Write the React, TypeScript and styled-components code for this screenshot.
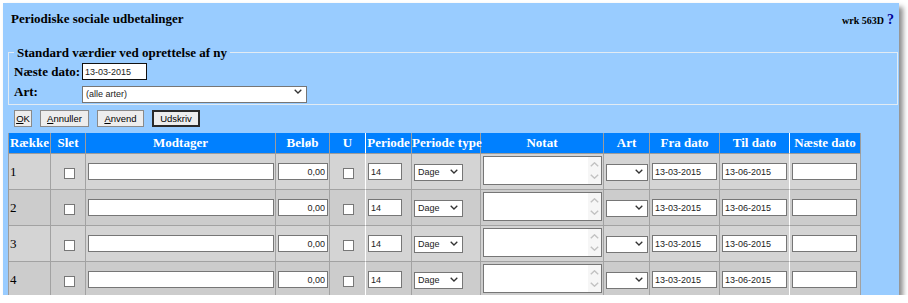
import React from "react";
import styled, { createGlobalStyle } from "styled-components";

const GlobalStyle = createGlobalStyle`
  html, body {
    margin: 0;
    padding: 0;
    background: #fff;
  }
  body {
    font-family: "Liberation Serif", "Times New Roman", serif;
    color: #000;
  }
`;

const sans = `"Liberation Sans", Arial, sans-serif`;

const Window = styled.div`
  margin: 3px 0 0 3px;
  width: 896px;
  height: 292px;
  background: #99ccff;
  box-shadow: 4px 4px 5px rgba(0, 0, 0, 0.45);
  overflow: hidden;
`;

const TitleBar = styled.div`
  display: flex;
  justify-content: space-between;
  align-items: flex-start;
  height: 42px;
  padding: 0 5px 0 8px;
`;

const Title = styled.h1`
  margin: 8px 0 0;
  font-size: 13px;
  line-height: 15px;
  font-weight: bold;
`;

const Meta = styled.div`
  margin-top: 9px;
  display: flex;
  align-items: baseline;
  gap: 3px;
  font-size: 10px;
  line-height: 16px;
  font-weight: bold;
`;

const Help = styled.span`
  font-size: 14px;
  color: #000099;
`;

const Fieldset = styled.fieldset`
  margin: 0 1px 0 5px;
  padding: 3px 4px 4px 5px;
  border: 1px solid #e2ebf3;
  min-width: 0;
`;

const Legend = styled.legend`
  padding: 0 3px;
  font-size: 13px;
  line-height: 15px;
  font-weight: bold;
`;

const FieldGrid = styled.div`
  display: grid;
  grid-template-columns: 68px auto;
  row-gap: 3px;
  align-items: center;
  justify-items: start;
`;

const Label = styled.label`
  font-size: 13px;
  line-height: 15px;
  font-weight: bold;
`;

const TextInput = styled.input<{ $w: number; $right?: boolean; $focus?: boolean }>`
  box-sizing: border-box;
  width: ${(p) => p.$w}px;
  height: 17px;
  margin: 0;
  padding: 0 2px;
  border: 1px solid ${(p) => (p.$focus ? "#111" : "#767676")};
  border-radius: 0;
  background: #fff;
  font: 9px ${sans};
  color: #222;
  text-align: ${(p) => (p.$right ? "right" : "left")};
  outline: none;
  vertical-align: middle;
`;

const SelectWrap = styled.div<{ $w: number }>`
  position: relative;
  width: ${(p) => p.$w}px;
  height: 17px;
`;

const Select = styled.select`
  appearance: none;
  box-sizing: border-box;
  width: 100%;
  height: 100%;
  margin: 0;
  padding: 0 14px 0 3px;
  border: 1px solid #767676;
  border-radius: 0;
  background: #fff;
  font: 9px ${sans};
  color: #222;
  outline: none;
`;

const Chevron = styled.svg`
  position: absolute;
  right: 5px;
  top: 6px;
  pointer-events: none;
`;

const ButtonRow = styled.div`
  display: flex;
  gap: 8px;
  margin: 5px 0 0 11px;
`;

const Button = styled.button<{ $w: number; $default?: boolean }>`
  box-sizing: border-box;
  width: ${(p) => p.$w}px;
  height: 17px;
  margin: 0;
  padding: 0;
  border: ${(p) => (p.$default ? "2px solid #2a2a2a" : "1px solid #8a8a8a")};
  border-radius: 0;
  background: #ededed;
  font: 9.5px ${sans};
  line-height: 13px;
  color: #000;
`;

const Table = styled.table`
  margin: 6px 0 0 5px;
  border-collapse: separate;
  border-spacing: 0;
  table-layout: fixed;
  width: 853px;
  border-left: 1px solid #9c9c9c;
`;

const Th = styled.th<{ $w: number; $edge?: boolean }>`
  box-sizing: border-box;
  width: ${(p) => p.$w}px;
  padding: 0;
  background: #0080ff;
  color: #fff;
  font-size: 13px;
  line-height: 20px;
  font-weight: bold;
  text-align: center;
  white-space: nowrap;
  border-right: 1px solid ${(p) => (p.$edge ? "#fff" : "#9c9c9c")};
  border-bottom: 1px solid #9c9c9c;
`;

const Row = styled.tr<{ $alt: boolean }>`
  background: ${(p) => (p.$alt ? "#cccccc" : "#d4d4d4")};
`;

const Td = styled.td<{ $edge?: boolean; $center?: boolean }>`
  padding: 0 0 0 2px;
  vertical-align: middle;
  text-align: ${(p) => (p.$center ? "center" : "left")};
  font-size: 13px;
  line-height: 15px;
  border-right: 1px solid ${(p) => (p.$edge ? "#fff" : "#a2a2a2")};
  border-bottom: 1px solid #a2a2a2;
`;

const NumCell = styled(Td)`
  padding-left: 1px;
`;

const Check = styled.input.attrs({ type: "checkbox" })`
  appearance: none;
  box-sizing: border-box;
  width: 11px;
  height: 11px;
  margin: 0;
  border: 1px solid #777;
  border-radius: 0;
  background: #fff;
  vertical-align: middle;
`;

const NoteBox = styled.div`
  display: flex;
  box-sizing: border-box;
  width: 119px;
  height: 29px;
  margin: 2px 0 4px;
  border: 1px solid #767676;
  background: #fff;
`;

const NoteArea = styled.textarea`
  flex: 1;
  min-width: 0;
  margin: 0;
  padding: 1px 2px;
  border: 0;
  resize: none;
  outline: none;
  overflow: hidden;
  background: transparent;
  font: 9px ${sans};
`;

const ScrollTrack = styled.div`
  width: 13px;
  padding: 5px 0;
  background: #f6f6f6;
  display: flex;
  flex-direction: column;
  justify-content: space-between;
  align-items: center;
`;

const columns = [
  { label: "Række", w: 42 },
  { label: "Slet", w: 35 },
  { label: "Modtager", w: 190 },
  { label: "Beløb", w: 54 },
  { label: "U", w: 36, edge: true },
  { label: "Periode", w: 46 },
  { label: "Periode type", w: 69 },
  { label: "Notat", w: 123 },
  { label: "Art", w: 46 },
  { label: "Fra dato", w: 70 },
  { label: "Til dato", w: 70, edge: true },
  { label: "Næste dato", w: 71 },
];

const rows = [1, 2, 3, 4].map((n) => ({
  n,
  amount: "0,00",
  period: "14",
  type: "Dage",
  from: "13-03-2015",
  to: "13-06-2015",
}));

const DownArrow = () => (
  <Chevron width="8" height="5" viewBox="0 0 8 5">
    <polyline points="0.7,0.7 4,4 7.3,0.7" fill="none" stroke="#333" strokeWidth="1.3" />
  </Chevron>
);

const Dropdown = ({ w, value, options }: { w: number; value: string; options: string[] }) => (
  <SelectWrap $w={w}>
    <Select defaultValue={value}>
      {options.map((o) => (
        <option key={o}>{o}</option>
      ))}
    </Select>
    <DownArrow />
  </SelectWrap>
);

const ScrollArrow = ({ up }: { up?: boolean }) => (
  <svg width="9" height="5" viewBox="0 0 9 5">
    <polyline
      points={up ? "0.8,4.3 4.5,0.8 8.2,4.3" : "0.8,0.7 4.5,4.2 8.2,0.7"}
      fill="none"
      stroke="#c2c2c2"
      strokeWidth="1.4"
    />
  </svg>
);

export default function App() {
  return (
    <>
      <GlobalStyle />
      <Window>
        <TitleBar>
          <Title>Periodiske sociale udbetalinger</Title>
          <Meta>
            <span>wrk 563D</span>
            <Help>?</Help>
          </Meta>
        </TitleBar>

        <Fieldset>
          <Legend>Standard værdier ved oprettelse af ny</Legend>
          <FieldGrid>
            <Label>Næste dato:</Label>
            <TextInput $w={65} $focus defaultValue="13-03-2015" />
            <Label>Art:</Label>
            <Dropdown w={225} value="(alle arter)" options={["(alle arter)"]} />
          </FieldGrid>
        </Fieldset>

        <ButtonRow>
          <Button $w={18}>
            <u>O</u>K
          </Button>
          <Button $w={49}>
            <u>A</u>nnuller
          </Button>
          <Button $w={47}>
            <u>A</u>nvend
          </Button>
          <Button $w={48} $default>
            Udskriv
          </Button>
        </ButtonRow>

        <Table>
          <thead>
            <tr>
              {columns.map((c) => (
                <Th key={c.label} $w={c.w} $edge={c.edge}>
                  {c.label}
                </Th>
              ))}
            </tr>
          </thead>
          <tbody>
            {rows.map((r) => (
              <Row key={r.n} $alt={r.n % 2 === 0}>
                <NumCell>{r.n}</NumCell>
                <Td $center>
                  <Check />
                </Td>
                <Td>
                  <TextInput $w={186} />
                </Td>
                <Td>
                  <TextInput $w={50} $right defaultValue={r.amount} />
                </Td>
                <Td $center $edge>
                  <Check />
                </Td>
                <Td>
                  <TextInput $w={34} defaultValue={r.period} />
                </Td>
                <Td>
                  <Dropdown w={49} value={r.type} options={["Dage", "Uger", "Måneder"]} />
                </Td>
                <Td>
                  <NoteBox>
                    <NoteArea />
                    <ScrollTrack>
                      <ScrollArrow up />
                      <ScrollArrow />
                    </ScrollTrack>
                  </NoteBox>
                </Td>
                <Td>
                  <Dropdown w={42} value="" options={[""]} />
                </Td>
                <Td>
                  <TextInput $w={65} defaultValue={r.from} />
                </Td>
                <Td $edge>
                  <TextInput $w={65} defaultValue={r.to} />
                </Td>
                <Td>
                  <TextInput $w={65} />
                </Td>
              </Row>
            ))}
          </tbody>
        </Table>
      </Window>
    </>
  );
}
